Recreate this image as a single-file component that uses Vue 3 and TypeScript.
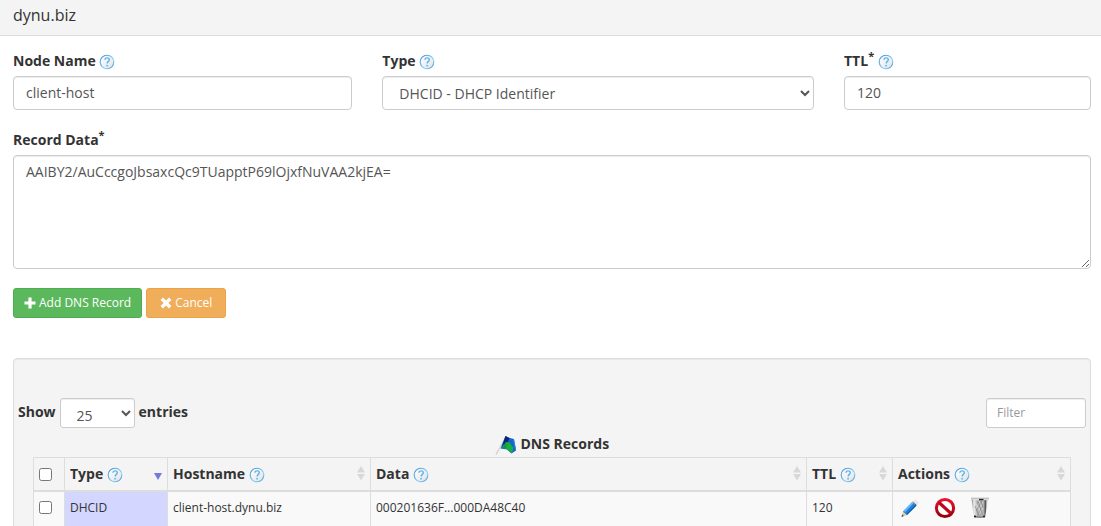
<script setup lang="ts">
import { ref } from 'vue'

interface Column {
  key: string
  label: string
  sort: 'desc' | 'none'
}

interface DnsRecord {
  type: string
  hostname: string
  data: string
  ttl: number
}

const nodeName = ref('client-host')
const recordType = ref('DHCID')
const ttl = ref('120')
const recordData = ref('AAIBY2/AuCccgoJbsaxcQc9TUapptP69lOjxfNuVAA2kjEA=')
const pageSize = ref('25')
const filter = ref('')

const columns: Column[] = [
  { key: 'type', label: 'Type', sort: 'desc' },
  { key: 'hostname', label: 'Hostname', sort: 'none' },
  { key: 'data', label: 'Data', sort: 'none' },
  { key: 'ttl', label: 'TTL', sort: 'none' },
  { key: 'actions', label: 'Actions', sort: 'none' },
]

const records: DnsRecord[] = [
  { type: 'DHCID', hostname: 'client-host.dynu.biz', data: '000201636F...000DA48C40', ttl: 120 },
]
</script>

<template>
  <svg class="defs" aria-hidden="true">
    <defs>
      <linearGradient id="ring" x1="0" y1="0" x2="1" y2="1">
        <stop offset="0" stop-color="#3b87cc" />
        <stop offset="0.35" stop-color="#62b4ea" />
        <stop offset="0.65" stop-color="#8fd2f2" />
        <stop offset="1" stop-color="#3d8fd0" />
      </linearGradient>
      <linearGradient id="disc" x1="0" y1="0" x2="1" y2="1">
        <stop offset="0" stop-color="#ffffff" />
        <stop offset="1" stop-color="#dfe3e6" />
      </linearGradient>
      <linearGradient id="red" x1="0" y1="0" x2="0" y2="1">
        <stop offset="0" stop-color="#e81330" />
        <stop offset="1" stop-color="#960008" />
      </linearGradient>
      <linearGradient id="metal" x1="0" y1="0" x2="1" y2="0">
        <stop offset="0" stop-color="#777" />
        <stop offset="0.15" stop-color="#f2f2f2" />
        <stop offset="0.35" stop-color="#a5a5a5" />
        <stop offset="0.7" stop-color="#b5b5b5" />
        <stop offset="0.82" stop-color="#555" />
        <stop offset="0.92" stop-color="#eee" />
        <stop offset="1" stop-color="#bbb" />
      </linearGradient>
      <symbol id="help" viewBox="0 0 16 16">
        <circle cx="8" cy="8" r="6.8" fill="url(#disc)" stroke="url(#ring)" stroke-width="1.1" />
        <path d="M5.9 5.8C6 4.5 6.9 3.9 8.1 3.9c1.3 0 2.2.7 2.2 1.8 0 1.6-2.1 1.8-2.1 3.8" fill="none" stroke="#5fb4e8" stroke-width="1.4" />
        <circle cx="8.1" cy="11.7" r="0.9" fill="#5fb4e8" />
      </symbol>
    </defs>
  </svg>

  <header class="title-bar"><h1>dynu.biz</h1></header>

  <main>
    <form class="record-form" @submit.prevent>
      <div class="field node">
        <label for="node-name">Node Name <svg class="help"><use href="#help" /></svg></label>
        <input id="node-name" v-model="nodeName" class="control" type="text" />
      </div>
      <div class="field type">
        <label for="record-type">Type <svg class="help"><use href="#help" /></svg></label>
        <select id="record-type" v-model="recordType" class="control">
          <option value="DHCID">DHCID - DHCP Identifier</option>
        </select>
      </div>
      <div class="field ttl">
        <label for="ttl">TTL<sup>*</sup> <svg class="help"><use href="#help" /></svg></label>
        <input id="ttl" v-model="ttl" class="control" type="text" />
      </div>
      <div class="field data">
        <label for="record-data">Record Data<sup>*</sup></label>
        <textarea id="record-data" v-model="recordData" class="control" spellcheck="false"></textarea>
      </div>
      <div class="buttons">
        <button class="btn add" type="submit">
          <svg viewBox="0 0 12 12"><path d="M4.4 0.5h3.2v3.9h3.9v3.2H7.6v3.9H4.4V7.6H0.5V4.4h3.9z" fill="#fff" /></svg>
          Add DNS Record
        </button>
        <button class="btn cancel" type="button">
          <svg viewBox="0 0 12 12"><path d="M2.9 0.6 6 3.5 9.1 0.6 11.4 2.9 8.4 6l3 3.1-2.3 2.3L6 8.5l-3.1 2.9L0.6 9.1 3.6 6 0.6 2.9z" fill="#fff" /></svg>
          Cancel
        </button>
      </div>
    </form>

    <section class="panel">
      <div class="tools">
        <label class="length">Show
          <select v-model="pageSize" class="control small">
            <option>10</option>
            <option>25</option>
            <option>50</option>
          </select>
          entries</label>
        <input v-model="filter" class="control small filter" type="search" placeholder="Filter" aria-label="Filter" />
      </div>

      <div class="table-wrap">
        <table>
          <caption>
            <svg class="flag" viewBox="0 0 22 20">
              <path d="M1 19.5 10.5 2.5" stroke="#cfcfcf" stroke-width="1.3" />
              <path d="M10.5 1 13 2.5 19 4 21 15.5 16.5 18.5 12 14.5 5.5 13.5z" fill="#1a63c8" />
              <path d="M10.5 1 14.5 3 12.5 8 7 11.5z" fill="#0a2479" />
              <path d="M11 7 14.5 7.5 18.5 13 17 18 12 14 6.5 13z" fill="#16b03c" />
              <path d="M8.2 9.5 12 8.5 11 13.8 6.5 13z" fill="#149060" />
              <path d="M18.5 4.5 20.5 14" stroke="#1e8fe0" stroke-width="1" />
            </svg>
            DNS Records
          </caption>
          <colgroup>
            <col class="c-check" /><col class="c-type" /><col class="c-host" />
            <col /><col class="c-ttl" /><col class="c-actions" />
          </colgroup>
          <thead>
            <tr>
              <th scope="col"><input type="checkbox" aria-label="Select all records" /></th>
              <th v-for="column in columns" :key="column.key" scope="col">
                <div class="head">
                  <span>{{ column.label }} <svg class="help"><use href="#help" /></svg></span>
                  <svg v-if="column.sort === 'desc'" class="sort" viewBox="0 0 8 16"><path d="M0 7h8l-4 7z" fill="#7679dc" /></svg>
                  <svg v-else class="sort" viewBox="0 0 8 16"><path d="M0 6.5h8L4 0zM0 8h8l-4 6.5z" fill="#d8d8d8" /></svg>
                </div>
              </th>
            </tr>
          </thead>
          <tbody>
            <tr v-for="record in records" :key="record.hostname">
              <td><input type="checkbox" :aria-label="`Select ${record.hostname}`" /></td>
              <td class="sorted">{{ record.type }}</td>
              <td>{{ record.hostname }}</td>
              <td>{{ record.data }}</td>
              <td>{{ record.ttl }}</td>
              <td class="action-cell">
                <div class="actions">
                  <button type="button" aria-label="Edit">
                    <svg viewBox="0 0 22 22">
                      <path d="M2.5 20 4 14.5 8 18z" fill="#dcc7a8" />
                      <path d="M2.5 20 3.2 17.5 4.8 19z" fill="#444" />
                      <path d="M4 14.5 13 5.2 17.5 8.6 8 18z" fill="#1c7fdc" />
                      <path d="M4.8 13.8 13 5.2 14.5 6.3 6 15.3z" fill="#68b9f5" />
                      <path d="M7.3 17.4 16.6 7.9 17.5 8.6 8 18z" fill="#0f579f" />
                      <path d="M13 5.2 14.8 3.4 19.3 6.7 17.5 8.6z" fill="#dde1e5" />
                      <path d="M13.5 5.2 17.3 8.1" stroke="#4f6478" />
                      <path d="M14.8 3.4 16.5 2 20.3 5 19.3 6.7z" fill="#f3eaea" />
                    </svg>
                  </button>
                  <button type="button" aria-label="Disable">
                    <svg viewBox="0 0 22 22">
                      <circle cx="11" cy="11" r="8.6" fill="#fff" stroke="url(#red)" stroke-width="3" />
                      <path d="M5 5.5 17 16.5" stroke="#c0061b" stroke-width="3.2" />
                    </svg>
                  </button>
                  <button type="button" aria-label="Delete">
                    <svg viewBox="0 0 22 22">
                      <path d="M2.5 1.5 5 20Q11 21.5 16 20L19.5 1.5z" fill="url(#metal)" />
                      <path d="M7 18 14 5M6 13 11 4M9 19l5-8M6.5 6l7 12M9 4l5 8" stroke="#e2e2e2" stroke-width="0.6" />
                      <path d="M6 9 10 19M9 4l4.5 14M12 4l2 7" stroke="#777" stroke-width="0.6" />
                      <path d="M5 18.3Q11 20.3 16.3 18.3L16 20.2Q11 21.8 5 20.2z" fill="#8a8a8a" />
                      <path d="M5 19.5h2M14 19.5h2" stroke="#222" stroke-width="1.5" />
                      <path d="M2 1h18v1.6Q11 4.6 2 2.6z" fill="#ddd" />
                      <path d="M2 1.2h18" stroke="#aaa" stroke-width="0.8" />
                      <path d="M10 2.6h4.5" stroke="#222" stroke-width="1.4" />
                    </svg>
                  </button>
                </div>
              </td>
            </tr>
          </tbody>
        </table>
      </div>
    </section>
  </main>
</template>

<style>
html {
  overflow: hidden;
}

body {
  margin: 0;
  background: #fff;
  color: #333;
  font: 14px/20px "Open Sans", sans-serif;
}
</style>

<style scoped>
* {
  box-sizing: border-box;
}

.defs {
  position: absolute;
  width: 0;
  height: 0;
}

.title-bar {
  height: 36px;
  padding: 4px 13px;
  border-bottom: 1px solid #ddd;
  background: #f4f4f4;
}

h1 {
  margin: 0;
  font-size: 16px;
  font-weight: 400;
  line-height: 22px;
}

main {
  padding: 15px 10px 0 13px;
}

.record-form {
  display: grid;
  grid-template-columns: repeat(12, minmax(0, 1fr));
  column-gap: 30px;
}

.field {
  display: flex;
  flex-direction: column;
}

.node { grid-column: span 4; }
.type { grid-column: span 5; }
.ttl { grid-column: span 3; }
.data, .buttons { grid-column: span 12; }

.data {
  margin-top: 20px;
}

.field label {
  height: 25px;
  font-weight: 700;
}

sup {
  position: relative;
  top: -6px;
  font-size: 11px;
  line-height: 0;
  vertical-align: baseline;
}

.help {
  width: 16px;
  height: 16px;
  vertical-align: -4px;
}

.control {
  width: 100%;
  height: 34px;
  margin: 0;
  padding: 6px 12px;
  border: 1px solid #ccc;
  border-radius: 4px;
  background-color: #fff;
  box-shadow: inset 0 1px 1px rgba(0, 0, 0, 0.075);
  color: #555;
  font: 14px/20px "Open Sans", sans-serif;
}

input[type="text"].control {
  padding: 5px 12px 7px;
}

textarea.control {
  display: block;
  height: 114px;
}

.buttons {
  display: flex;
  gap: 4px;
  margin-top: 19px;
}

.btn {
  display: flex;
  align-items: center;
  justify-content: center;
  gap: 3px;
  height: 30px;
  padding: 0 10px;
  border: 1px solid #4cae4c;
  border-radius: 3px;
  background: #5cb85c;
  color: #fff;
  font: 12px/18px "Open Sans", sans-serif;
}

.btn svg {
  width: 12px;
  height: 12px;
}

.cancel {
  padding: 0 13px;
  border-color: #eea247;
  background: #f0ad5a;
}

.panel {
  margin-top: 40px;
  padding: 39px 4px 20px;
  border: 1px solid #ddd;
  border-radius: 4px;
  background: #f4f4f4;
  box-shadow: inset 0 1px 1px rgba(0, 0, 0, 0.05);
}

.tools {
  display: flex;
  align-items: flex-start;
  justify-content: space-between;
}

.length {
  display: flex;
  gap: 4px;
  font-weight: 700;
  line-height: 28px;
}

.control.small {
  width: 75px;
  height: 30px;
  padding: 5px 10px;
  border-radius: 3px;
  font-size: 12px;
}

.length .control.small {
  padding: 5px 12px 0;
  font-size: 14px;
}

.control.filter {
  width: 100px;
  padding: 4px 10px 6px;
}

.filter::placeholder {
  color: #999;
}

.table-wrap {
  padding: 0 15px;
}

table {
  width: 100%;
  border-collapse: collapse;
  table-layout: fixed;
}

caption {
  height: 29px;
  padding-top: 6px;
  font-weight: 700;
}

.flag {
  width: 22px;
  height: 20px;
  vertical-align: -6px;
}

.c-check { width: 31px; }
.c-type { width: 103px; }
.c-host { width: 203px; }
.c-ttl { width: 86px; }
.c-actions { width: 178px; }

th,
td {
  padding: 5px;
  border: 1px solid #ddd;
  text-align: left;
}

th {
  height: 33px;
  padding-bottom: 4px;
  border-bottom-width: 2px;
}

td {
  height: 36px;
  padding-bottom: 7px;
  background: #f9f9f9;
  font-size: 12px;
}

td.sorted {
  background: #d3d6ff;
}

td.action-cell {
  padding-left: 6px;
}

input[type="checkbox"] {
  display: block;
  width: 13px;
  height: 13px;
  margin: 0;
}

.head {
  display: flex;
  align-items: center;
  justify-content: space-between;
}

.sort {
  width: 8px;
  height: 16px;
}

.actions {
  display: flex;
  gap: 13px;
}

.actions button {
  width: 22px;
  height: 22px;
  padding: 0;
  border: 0;
  background: none;
}

.actions svg {
  display: block;
  width: 22px;
  height: 22px;
}
</style>
